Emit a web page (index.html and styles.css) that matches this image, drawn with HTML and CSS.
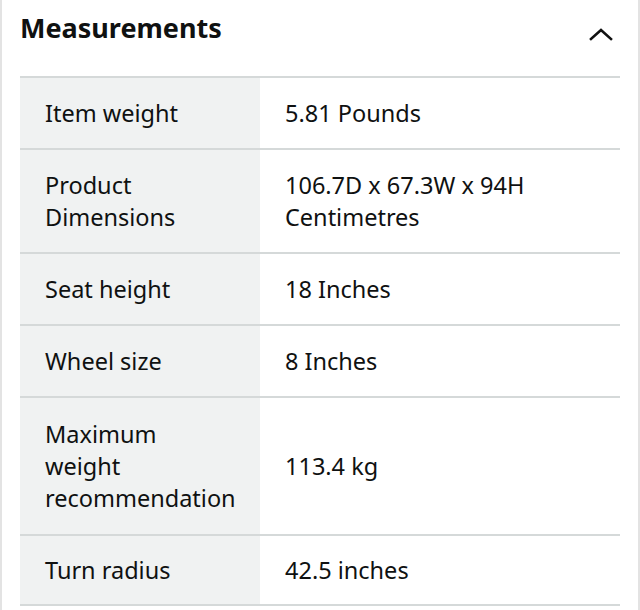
FILE: index.html
```html
<!DOCTYPE html>
<html lang="en">
<head>
<meta charset="utf-8">
<title>Measurements</title>
<link rel="stylesheet" href="styles.css">
</head>
<body>
<div class="panel">
  <div class="header">
    <h2 class="title">Measurements</h2>
    <svg class="chevron" width="24" height="14" viewBox="0 0 24 14" aria-hidden="true">
      <path d="M2 12 L12 3 L22 12" fill="none" stroke="#111" stroke-width="2.6" stroke-linecap="square"/>
    </svg>
  </div>
  <table class="specs">
    <tr><th>Item weight</th><td>5.81 Pounds</td></tr>
    <tr><th>Product Dimensions</th><td>106.7D x 67.3W x 94H Centimetres</td></tr>
    <tr><th>Seat height</th><td>18 Inches</td></tr>
    <tr><th>Wheel size</th><td>8 Inches</td></tr>
    <tr class="tall"><th>Maximum weight recommendation</th><td>113.4 kg</td></tr>
    <tr class="last"><th>Turn radius</th><td>42.5 inches</td></tr>
  </table>
</div>
</body>
</html>
```
FILE: styles.css
```css
html, body {
  margin: 0;
  padding: 0;
  background: #fff;
}
body {
  font-family: "Noto Sans", "Open Sans", sans-serif;
  color: #0f1111;
}
.panel {
  width: 640px;
  min-height: 610px;
  box-sizing: border-box;
  border-left: 2px solid #e3e3e3;
  border-right: 2px solid #e3e3e3;
  padding: 0 18px 0 18px;
}
.header {
  height: 76px;
  display: flex;
  align-items: flex-start;
  justify-content: space-between;
}
.title {
  margin: 9px 0 0 0;
  font-size: 27px;
  font-weight: 700;
  line-height: 38px;
}
.chevron {
  margin-top: 27px;
  margin-right: 7px;
}
.specs {
  width: 600px;
  border-collapse: collapse;
  table-layout: fixed;
}
.specs tr {
  border-top: 2px solid #d5d9d9;
  border-bottom: 2px solid #d5d9d9;
}
.specs th, .specs td {
  text-align: left;
  font-weight: 400;
  font-size: 23.5px;
  line-height: 32px;
  padding: 19px 25px 19px 25px;
  vertical-align: middle;
}
.specs th {
  width: 191px;
  padding-right: 24px;
  background: #f0f2f2;
}
.specs tr.tall th, .specs tr.tall td {
  padding-top: 20px;
  padding-bottom: 20px;
}
.specs tr.last th, .specs tr.last td {
  padding-top: 18px;
  padding-bottom: 18px;
}
```
